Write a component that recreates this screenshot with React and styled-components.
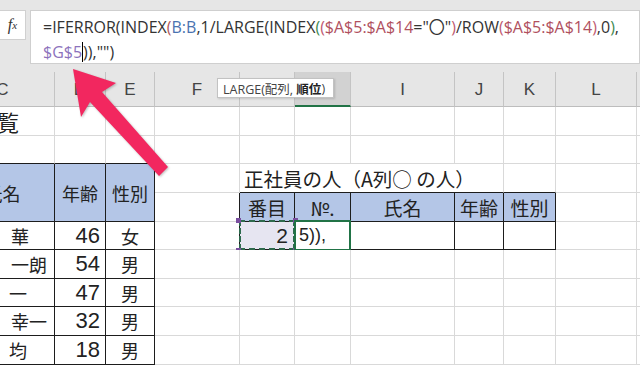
import React from 'react';
import styled, { createGlobalStyle } from 'styled-components';

const GlobalStyle = createGlobalStyle`
  html, body {
    margin: 0;
    padding: 0;
    background: #fff;
  }
  body {
    font-family: 'Open Sans', 'Noto Sans CJK JP', sans-serif;
    overflow: hidden;
  }
`;

const BLACK = '#1d1d1d';
const GRID = '#d9d9d9';
const BLUE = '#b4c6e7';
const GREEN = '#217346';

const colWidths = [104, 51, 49, 85, 55, 56, 104, 49, 52, 81, 60];
const rowHeights = [35, 29, 28, 29, 29, 28, 29, 28, 29, 29];
const letters = ['C', 'D', 'E', 'F', 'G', 'H', 'I', 'J', 'K', 'L', 'M'];

const Page = styled.div`
  position: relative;
  width: 640px;
  height: 365px;
  overflow: hidden;
  background: #fff;
`;

const FormulaBar = styled.div`
  display: flex;
  align-items: flex-start;
  gap: 4px;
  height: 72px;
  box-sizing: border-box;
  padding-top: 10px;
  margin-left: -1px;
  background: #e6e6e6;
`;

const FxBox = styled.div`
  width: 27px;
  height: 30px;
  box-sizing: border-box;
  background: #fff;
  border: 1px solid #d0d0d0;
  display: flex;
  align-items: center;
  justify-content: center;
  font-family: 'Liberation Serif', serif;
  font-style: italic;
  font-size: 16px;
  color: #333;

  sub {
    font-size: 11px;
    vertical-align: -1px;
  }
`;

const FormulaBox = styled.div`
  flex: 1;
  height: 54px;
  box-sizing: border-box;
  background: #fff;
  border: 1px solid #cfcfcf;
  padding: 4px 0 0 12px;
  font-family: 'Open Sans', 'Noto Sans CJK JP', sans-serif;
  font-size: 16px;
  line-height: 25px;
  color: #333;
  white-space: nowrap;
`;

const Ref = styled.span`
  color: ${p => p.$c};
`;

const Caret = styled.span`
  display: inline-block;
  width: 0;
  height: 20px;
  border-left: 1px solid #000;
  vertical-align: -4px;
`;

const Grid = styled.div`
  display: grid;
  margin-left: -49px;
  grid-template-columns: ${colWidths.map(w => w + 'px').join(' ')};
  grid-template-rows: ${rowHeights.map(h => h + 'px').join(' ')};
`;

const ColHeader = styled.div`
  box-sizing: border-box;
  display: flex;
  align-items: center;
  justify-content: center;
  background: ${p => (p.$active ? '#d2d2d2' : '#e6e6e6')};
  border-right: 1px solid #c4c4c4;
  border-bottom: ${p => (p.$active ? `2px solid ${GREEN}` : '1px solid #bdbdbd')};
  font-family: 'Liberation Sans', sans-serif;
  font-size: 17px;
  color: ${p => (p.$active ? '#1e5a38' : '#444')};
  padding-top: 2px;
`;

const Cell = styled.div`
  position: relative;
  box-sizing: border-box;
  display: flex;
  align-items: center;
  justify-content: ${p => p.$align || 'center'};
  padding: 0 ${p => p.$pr || 0}px 0 ${p => p.$pl || 0}px;
  background: ${p => p.$fill || '#fff'};
  border-right: 1px solid ${p => p.$r || GRID};
  border-bottom: 1px solid ${p => p.$b || GRID};
  grid-column: ${p => (p.$cspan ? `span ${p.$cspan}` : 'auto')};
  grid-row: ${p => (p.$rspan ? `span ${p.$rspan}` : 'auto')};
  font-family: ${p => (p.$num ? "'Liberation Sans', sans-serif" : "'Noto Sans CJK JP', sans-serif")};
  font-size: ${p => p.$size || 18}px;
  color: #222;
  white-space: nowrap;
`;

const Marquee = styled.div`
  position: absolute;
  left: -1px;
  top: -2px;
  right: -1px;
  bottom: -1px;
  border: 2px dashed #2e6a4d;
`;

const EditBox = styled.div`
  position: absolute;
  left: -1px;
  top: -2px;
  right: -1px;
  bottom: -2px;
  border: 2px solid ${GREEN};
`;

const Handle = styled.span`
  position: absolute;
  width: 5px;
  height: 5px;
  background: ${p => p.$c || '#7a4f9f'};
  ${p => (p.$top ? 'top: -4px;' : 'bottom: -4px;')}
  ${p => (p.$left ? 'left: -4px;' : 'right: -4px;')}
`;

const Tooltip = styled.div`
  position: absolute;
  left: 217px;
  top: 78px;
  width: 117px;
  height: 20px;
  box-sizing: border-box;
  padding: 0 5px;
  display: flex;
  align-items: center;
  background: #fff;
  border: 1px solid #c2c2c2;
  box-shadow: 1px 1px 2px rgba(0, 0, 0, 0.15);
  font-family: 'Open Sans', 'Noto Sans CJK JP', sans-serif;
  font-size: 12.5px;
  color: #444;
  white-space: pre;

  b {
    font-weight: 700;
    color: #222;
  }
`;

const ArrowSvg = styled.svg`
  position: absolute;
  left: 0;
  top: 0;
  pointer-events: none;
  filter: drop-shadow(1px 1px 1px rgba(0, 0, 0, 0.25));
`;

const people = [
  { name: '華', pad: 25, age: 46, sex: '女' },
  { name: '一朗', pad: 7, age: 54, sex: '男' },
  { name: '一', pad: 27, age: 47, sex: '男' },
  { name: '幸一', pad: 7, age: 32, sex: '男' },
  { name: '均', pad: 27, age: 18, sex: '男' },
];

const blanks = (n, prefix) =>
  Array.from({ length: n }, (_, i) => <Cell key={prefix + i} />);

function PersonCells({ p }) {
  return (
    <>
      <Cell $r={BLACK} $b={BLACK} $align="flex-end" $pr={p.pad}>{p.name}</Cell>
      <Cell $r={BLACK} $b={BLACK} $align="flex-end" $pr={5} $num $size={22}>{p.age}</Cell>
      <Cell $r={BLACK} $b={BLACK}>{p.sex}</Cell>
    </>
  );
}

export default function App() {
  return (
    <>
      <GlobalStyle />
      <Page>
        <FormulaBar>
          <FxBox>f<sub>x</sub></FxBox>
          <FormulaBox>
            <div>
              =IFERROR(INDEX<Ref $c="#b35a5a">(</Ref><Ref $c="#4a72b0">B:B</Ref>,1/LARGE(INDEX<Ref $c="#3f8a52">(</Ref>
              <Ref $c="#c05a72">(</Ref><Ref $c="#b0505e">$A$5:$A$14</Ref>="〇"<Ref $c="#c05a72">)</Ref>/ROW
              <Ref $c="#c05a72">(</Ref><Ref $c="#b0505e">$A$5:$A$14</Ref><Ref $c="#c05a72">)</Ref>,0<Ref $c="#3f8a52">)</Ref>,
            </div>
            <div>
              <Ref $c="#8c72bc">$G$5</Ref><Caret />)),"")
            </div>
          </FormulaBox>
        </FormulaBar>

        <Grid>
          {letters.map(l => (
            <ColHeader key={l} $active={l === 'H'}>{l}</ColHeader>
          ))}

          {/* row 1 */}
          <Cell $align="flex-start" $pl={46} $size={22}>覧</Cell>
          {blanks(10, 'r1-')}

          {/* row 2 */}
          <Cell $b={BLACK} />
          <Cell $b={BLACK} />
          <Cell $b={BLACK} />
          {blanks(8, 'r2-')}

          {/* row 3: left header spans two rows, right title */}
          <Cell $rspan={2} $fill={BLUE} $r={BLACK} $b={BLACK}>氏名</Cell>
          <Cell $rspan={2} $fill={BLUE} $r={BLACK} $b={BLACK}>年齢</Cell>
          <Cell $rspan={2} $fill={BLUE} $r={BLACK} $b={BLACK}>性別</Cell>
          <Cell />
          <Cell $cspan={4} $b={BLACK} $align="flex-start" $pl={4} $size={19.5}>正社員の人（A列○ の人）</Cell>
          <Cell $b={BLACK} />
          {blanks(2, 'r3-')}

          {/* row 4: right table header */}
          <Cell $r={BLACK} />
          {['番目', '№.', '氏名', '年齢', '性別'].map(h => (
            <Cell key={h} $fill={BLUE} $r={BLACK} $b={BLACK} $size={19}>{h}</Cell>
          ))}
          {blanks(2, 'r4-')}

          {/* row 5 */}
          <PersonCells p={people[0]} />
          <Cell $r={BLACK} />
          <Cell $fill="#e6e5f1" $r={BLACK} $b={BLACK} $align="flex-end" $pr={6} $num $size={21}>
            2
            <Marquee />
            <Handle $top $left />
            <Handle $top />
            <Handle $left />
            <Handle />
          </Cell>
          <Cell $r={BLACK} $b={BLACK} $align="flex-start" $pl={4} $num $size={18}>
            5)),
            <EditBox />
            <Handle $c={GREEN} />
          </Cell>
          <Cell $r={BLACK} $b={BLACK} />
          <Cell $r={BLACK} $b={BLACK} />
          <Cell $r={BLACK} $b={BLACK} />
          {blanks(2, 'r5-')}

          {people.slice(1).map((p, i) => (
            <React.Fragment key={i}>
              <PersonCells p={p} />
              {blanks(8, 'p' + i + '-')}
            </React.Fragment>
          ))}
        </Grid>

        <Tooltip>{'LARGE(配列, '}<b>順位</b>)</Tooltip>

        <ArrowSvg width="640" height="365" viewBox="0 0 640 365">
          <polygon
            points="73,69 116,83 102,92 168,167 159,176 90,102 81,117"
            fill="#f2275f"
          />
        </ArrowSvg>
      </Page>
    </>
  );
}
